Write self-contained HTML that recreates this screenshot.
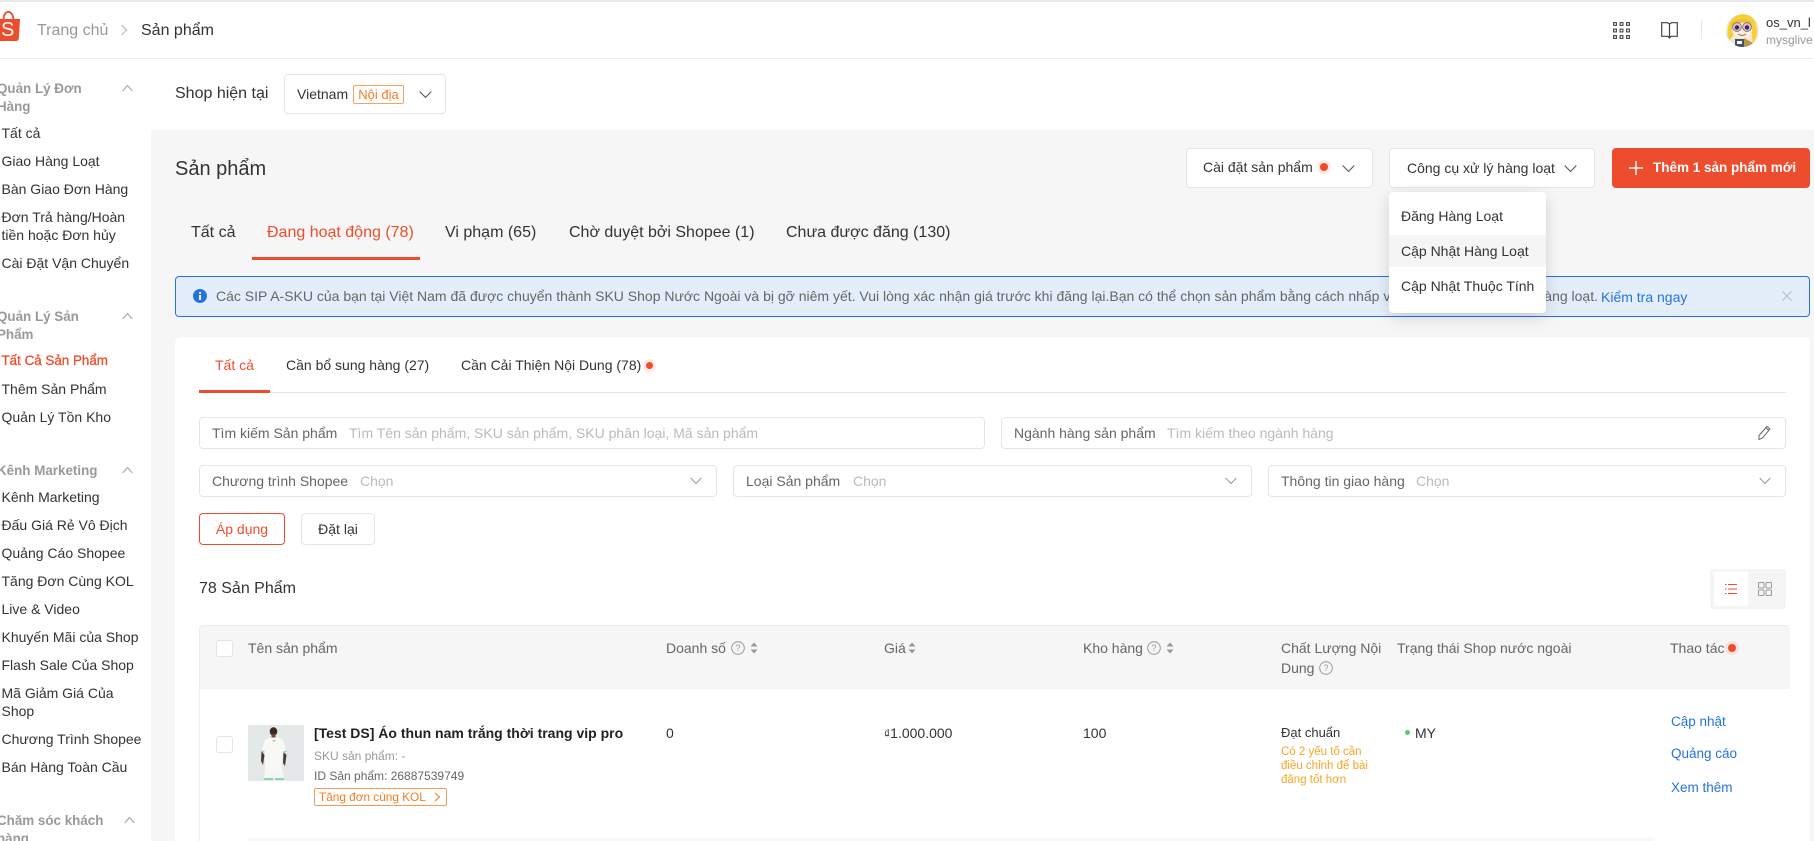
<!DOCTYPE html>
<html lang="vi">
<head>
<meta charset="utf-8">
<title>Sản phẩm</title>
<style>
html,body{margin:0;padding:0;width:1814px;height:841px;overflow:hidden;background:#fff}
body{position:relative;font-family:"Liberation Sans","Noto Sans CJK SC",sans-serif;font-size:14px;color:#333}
.t{position:absolute;white-space:nowrap;line-height:20px}
.b{position:absolute;box-sizing:border-box}
.box{position:absolute;box-sizing:border-box;background:#fff;border:1px solid #e5e5e5;border-radius:4px}
.h{font-weight:700;color:#999;font-size:13.400px;margin-top:1px}
.red{color:#ee4d2d}
.g{color:#999}
.l{color:#bbb}
.m{color:#666}
.a{color:#2673dd}
svg{position:absolute;display:block}
.dot{position:absolute;width:8px;height:8px;border-radius:50%;background:#ee4d2d;box-shadow:0 0 0 3px rgba(238,77,45,.12)}
.cb{position:absolute;box-sizing:border-box;width:17px;height:17px;background:#fff;border:1px solid #e5e5e5;border-radius:3px}
</style>
</head>
<body>
<!-- top -->
<div class="b" style="left:0;top:0;width:1814px;height:2px;background:#e8e8e8"></div>
<div class="b" style="left:0;top:58px;width:1814px;height:1px;background:#ececec"></div>
<svg style="left:0;top:11px" width="20" height="31" viewBox="0 0 20 31"><path d="M-1 8H20L18.800 27.500Q18.600 30 16 30H-1Z" fill="#ee4d2d"/><path d="M3.500 8C4 -1.500 12.500 -1.500 13.500 8" fill="none" stroke="#ee4d2d" stroke-width="1.800"/></svg>
<div class="t" style="left:1px;top:20px;color:#fff;font-size:20px">S</div>
<div class="t g" style="left:37px;top:21px;font-size:16px">Trang chủ</div>
<svg style="left:120px;top:24px" width="8" height="12" viewBox="0 0 8 12"><path d="M1.500 1L6.500 6L1.500 11" fill="none" stroke="#bbb" stroke-width="1.200"/></svg>
<div class="t" style="left:141px;top:21px;font-size:16px">Sản phẩm</div>
<svg style="left:1613px;top:22px" width="17" height="17" viewBox="0 0 17 17"><g fill="none" stroke="#444" stroke-width="1.100"><rect x=".6" y=".6" width="2.800" height="2.800"/><rect x="7.100" y=".6" width="2.800" height="2.800"/><rect x="13.600" y=".6" width="2.800" height="2.800"/><rect x=".6" y="7.100" width="2.800" height="2.800"/><rect x="7.100" y="7.100" width="2.800" height="2.800"/><rect x="13.600" y="7.100" width="2.800" height="2.800"/><rect x=".6" y="13.600" width="2.800" height="2.800"/><rect x="7.100" y="13.600" width="2.800" height="2.800"/><rect x="13.600" y="13.600" width="2.800" height="2.800"/></g></svg>
<svg style="left:1661px;top:22px" width="17" height="17" viewBox="0 0 17 17"><path d="M.7.7H6.500L8.500 2L10.500.7H16.300V14.300H10L8.500 16L7 14.300H.7ZM8.500 2V16" fill="none" stroke="#444" stroke-width="1.200"/></svg>
<div class="b" style="left:1701px;top:20px;width:1px;height:18px;background:#e5e5e5"></div>
<svg style="left:1726px;top:14px" width="33" height="33" viewBox="0 0 33 33"><defs><clipPath id="av"><circle cx="16.500" cy="16.500" r="16.500"/></clipPath></defs><g clip-path="url(#av)"><rect width="33" height="33" fill="#f4e6d2"/><path d="M0 33V18L3 28L9 33Z" fill="#6f7f5a"/><path d="M3 26C-1 12 5 1 17 0C28 1 33 10 30 24L27 30L25 14C20 8 12 8 8 14L7 22Z" fill="#f2d03a"/><ellipse cx="16" cy="15.500" rx="10" ry="9" fill="#fbeedd"/><path d="M5 9C10 4 20 3 27 9C22 8 12 8 5 12Z" fill="#eec52c"/><circle cx="11" cy="13" r="4.400" fill="#eab6d6" stroke="#6a5a6a" stroke-width=".7"/><circle cx="21" cy="13" r="4.400" fill="#eab6d6" stroke="#6a5a6a" stroke-width=".7"/><circle cx="11" cy="13.500" r="2.200" fill="#2c3050"/><circle cx="21" cy="13.500" r="2.200" fill="#2c3050"/><path d="M12 20Q16 23 20 20" fill="none" stroke="#a0665a" stroke-width="1"/><rect x="9" y="25" width="9" height="8" fill="#3d5268"/><rect x="11" y="27" width="5" height="3" fill="#fff"/><path d="M18 24L27 29L24 33H18Z" fill="#b9944e"/></g></svg>
<div class="t" style="left:1766px;top:13px;font-size:13px">os_vn_l</div>
<div class="t g" style="left:1766px;top:30px;font-size:12px">mysglive</div>

<!-- sidebar -->
<div class="t h" style="left:-3px;top:78px">Quản Lý Đơn</div>
<div class="t h" style="left:-3px;top:96px">Hàng</div>
<svg style="left:122px;top:84px" width="11" height="8" viewBox="0 0 11 8"><path d="M.7 7L5.500 1.500L10.300 7" fill="none" stroke="#aaa" stroke-width="1.200"/></svg>
<div class="t" style="left:1.500px;top:123px">Tất cả</div>
<div class="t" style="left:1.500px;top:151px">Giao Hàng Loạt</div>
<div class="t" style="left:1.500px;top:179px">Bàn Giao Đơn Hàng</div>
<div class="t" style="left:1.500px;top:207px">Đơn Trả hàng/Hoàn</div>
<div class="t" style="left:1.500px;top:225px">tiền hoặc Đơn hủy</div>
<div class="t" style="left:1.500px;top:253px">Cài Đặt Vận Chuyển</div>
<div class="t h" style="left:-3px;top:306px">Quản Lý Sản</div>
<div class="t h" style="left:-3px;top:324px">Phẩm</div>
<svg style="left:122px;top:312px" width="11" height="8" viewBox="0 0 11 8"><path d="M.7 7L5.500 1.500L10.300 7" fill="none" stroke="#aaa" stroke-width="1.200"/></svg>
<div class="t red" style="left:1.500px;top:351px;font-size:13.400px;-webkit-text-stroke:.3px #ee4d2d">Tất Cả Sản Phẩm</div>
<div class="t" style="left:1.500px;top:379px">Thêm Sản Phẩm</div>
<div class="t" style="left:1.500px;top:407px">Quản Lý Tồn Kho</div>
<div class="t h" style="left:-3px;top:460px">Kênh Marketing</div>
<svg style="left:122px;top:466px" width="11" height="8" viewBox="0 0 11 8"><path d="M.7 7L5.500 1.500L10.300 7" fill="none" stroke="#aaa" stroke-width="1.200"/></svg>
<div class="t" style="left:1.500px;top:487px">Kênh Marketing</div>
<div class="t" style="left:1.500px;top:515px">Đấu Giá Rẻ Vô Địch</div>
<div class="t" style="left:1.500px;top:543px">Quảng Cáo Shopee</div>
<div class="t" style="left:1.500px;top:571px">Tăng Đơn Cùng KOL</div>
<div class="t" style="left:1.500px;top:599px">Live &amp; Video</div>
<div class="t" style="left:1.500px;top:627px">Khuyến Mãi của Shop</div>
<div class="t" style="left:1.500px;top:655px">Flash Sale Của Shop</div>
<div class="t" style="left:1.500px;top:683px">Mã Giảm Giá Của</div>
<div class="t" style="left:1.500px;top:701px">Shop</div>
<div class="t" style="left:1.500px;top:729px">Chương Trình Shopee</div>
<div class="t" style="left:1.500px;top:757px">Bán Hàng Toàn Cầu</div>
<div class="t h" style="left:-3px;top:810px">Chăm sóc khách</div>
<div class="t h" style="left:-3px;top:828px">hàng</div>
<svg style="left:124px;top:816px" width="11" height="8" viewBox="0 0 11 8"><path d="M.7 7L5.500 1.500L10.300 7" fill="none" stroke="#aaa" stroke-width="1.200"/></svg>

<!-- shop select -->
<div class="t" style="left:175px;top:84px;font-size:16px">Shop hiện tại</div>
<div class="box" style="left:284px;top:74px;width:162px;height:40px"></div>
<div class="t" style="left:297px;top:84px">Vietnam</div>
<div class="b" style="left:353px;top:85px;width:51px;height:19px;border:1px solid #f4a460;border-radius:2px;color:#f57c1f;font-size:13px;line-height:17px;text-align:center">Nội địa</div>
<svg style="left:419px;top:90px" width="13" height="9" viewBox="0 0 13 9"><path d="M.7 1.500L6.500 7.500L12.300 1.500" fill="none" stroke="#555" stroke-width="1.100"/></svg>

<!-- main bg -->
<div class="b" style="left:151px;top:130px;width:1663px;height:711px;background:#f6f6f6"></div>
<div class="t" style="left:175px;top:159px;font-size:20px;line-height:20px">Sản phẩm</div>
<div class="box" style="left:1186px;top:148px;width:187px;height:40px"></div>
<div class="t" style="left:1203px;top:157px">Cài đặt sản phẩm</div>
<div class="dot" style="left:1320px;top:163px"></div>
<svg style="left:1342px;top:164px" width="13" height="9" viewBox="0 0 13 9"><path d="M.7 1.500L6.500 7.500L12.300 1.500" fill="none" stroke="#555" stroke-width="1.100"/></svg>
<div class="box" style="left:1389px;top:148px;width:206px;height:40px"></div>
<div class="t" style="left:1407px;top:158px">Công cụ xử lý hàng loạt</div>
<svg style="left:1564px;top:164px" width="13" height="9" viewBox="0 0 13 9"><path d="M.7 1.500L6.500 7.500L12.300 1.500" fill="none" stroke="#555" stroke-width="1.100"/></svg>
<div class="b" style="left:1612px;top:148px;width:198px;height:40px;background:#ee4d2d;border-radius:4px"></div>
<svg style="left:1629px;top:161px" width="14" height="14" viewBox="0 0 14 14"><path d="M7 0V14M0 7H14" stroke="#fff" stroke-width="1.400"/></svg>
<div class="t" style="left:1653px;top:158px;color:#fff;font-weight:700;font-size:13.500px">Thêm 1 sản phẩm mới</div>

<!-- tabs -->
<div class="t" style="left:191px;top:223px;font-size:16px">Tất cả</div>
<div class="t red" style="left:267px;top:223px;font-size:16px">Đang hoạt động (78)</div>
<div class="b" style="left:252px;top:257px;width:168px;height:3px;background:#ee4d2d"></div>
<div class="t" style="left:445px;top:223px;font-size:16px">Vi phạm (65)</div>
<div class="t" style="left:569px;top:223px;font-size:16px">Chờ duyệt bởi Shopee (1)</div>
<div class="t" style="left:786px;top:223px;font-size:16px">Chưa được đăng (130)</div>

<!-- alert -->
<div class="b" style="left:175px;top:276px;width:1635px;height:41px;background:#e4eefa;border:1px solid #2673dd;border-radius:4px"></div>
<svg style="left:193px;top:289px" width="14" height="14" viewBox="0 0 14 14"><circle cx="7" cy="7" r="7" fill="#2673dd"/><rect x="6.100" y="3" width="1.900" height="1.900" fill="#fff"/><rect x="6.100" y="6" width="1.900" height="5" fill="#fff"/></svg>
<div class="t m" style="left:216px;top:286px">Các SIP A-SKU của bạn tại Việt Nam đã được chuyển thành SKU Shop Nước Ngoài và bị gỡ niêm yết. Vui lòng xác nhận giá trước khi đăng lại.Bạn có thể chọn sản phẩm bằng cách nhấp vào</div>
<div class="t m" style="right:216px;top:286px">hàng loạt.</div>
<div class="t a" style="left:1601px;top:287px">Kiểm tra ngay</div>
<svg style="left:1782px;top:291px" width="10" height="10" viewBox="0 0 10 10"><path d="M.5.5L9.500 9.500M9.500.5L.5 9.500" stroke="#b8b8b8" stroke-width="1"/></svg>

<!-- card -->
<div class="b" style="left:175px;top:337px;width:1635px;height:504px;background:#fff;border-radius:6px 6px 0 0"></div>
<div class="t red" style="left:215px;top:355px">Tất cả</div>
<div class="t" style="left:286px;top:355px">Cần bổ sung hàng (27)</div>
<div class="t" style="left:461px;top:355px">Cần Cải Thiện Nội Dung (78)</div>
<div class="dot" style="left:646px;top:362px;width:7px;height:7px"></div>
<div class="b" style="left:199px;top:392px;width:1587px;height:1px;background:#e5e5e5"></div>
<div class="b" style="left:199px;top:390px;width:71px;height:3px;background:#ee4d2d"></div>

<!-- filters -->
<div class="box" style="left:199px;top:417px;width:786px;height:32px"></div>
<div class="t m" style="left:212px;top:423px">Tìm kiếm Sản phẩm</div>
<div class="t l" style="left:349px;top:423px">Tìm Tên sản phẩm, SKU sản phẩm, SKU phân loại, Mã sản phẩm</div>
<div class="box" style="left:1001px;top:417px;width:785px;height:32px"></div>
<div class="t m" style="left:1014px;top:423px">Ngành hàng sản phẩm</div>
<div class="t l" style="left:1167px;top:423px">Tìm kiếm theo ngành hàng</div>
<svg style="left:1757px;top:425px" width="15" height="16" viewBox="0 0 15 16"><path d="M2 10.500L10 1.500L13 4L5.500 13L2 14.500ZM9 3L11.800 5.500" fill="none" stroke="#666" stroke-width="1"/></svg>
<div class="box" style="left:199px;top:465px;width:518px;height:32px"></div>
<div class="t m" style="left:212px;top:471px">Chương trình Shopee</div>
<div class="t l" style="left:360px;top:471px">Chọn</div>
<svg style="left:690px;top:477px" width="12" height="8" viewBox="0 0 12 8"><path d="M.7 1L6 6.500L11.300 1" fill="none" stroke="#999" stroke-width="1"/></svg>
<div class="box" style="left:733px;top:465px;width:519px;height:32px"></div>
<div class="t m" style="left:746px;top:471px">Loại Sản phẩm</div>
<div class="t l" style="left:853px;top:471px">Chọn</div>
<svg style="left:1225px;top:477px" width="12" height="8" viewBox="0 0 12 8"><path d="M.7 1L6 6.500L11.300 1" fill="none" stroke="#999" stroke-width="1"/></svg>
<div class="box" style="left:1268px;top:465px;width:518px;height:32px"></div>
<div class="t m" style="left:1281px;top:471px">Thông tin giao hàng</div>
<div class="t l" style="left:1416px;top:471px">Chọn</div>
<svg style="left:1759px;top:477px" width="12" height="8" viewBox="0 0 12 8"><path d="M.7 1L6 6.500L11.300 1" fill="none" stroke="#999" stroke-width="1"/></svg>
<div class="box red" style="left:199px;top:513px;width:86px;height:32px;border-color:#ee4d2d;text-align:center;line-height:30px">Áp dụng</div>
<div class="box" style="left:301px;top:513px;width:74px;height:32px;text-align:center;line-height:30px">Đặt lại</div>

<div class="t" style="left:199px;top:579px;font-size:16px">78 Sản Phẩm</div>
<div class="b" style="left:1710px;top:569px;width:76px;height:40px;background:#f5f5f5;border-radius:3px"></div>
<div class="b" style="left:1714px;top:572px;width:34px;height:34px;background:#fff"></div>
<svg style="left:1725px;top:583px" width="12" height="12" viewBox="0 0 12 12"><path d="M0 1.500H1.500M3 1.500H12M0 6H1.500M3 6H12M0 10.500H1.500M3 10.500H12" stroke="#ee4d2d" stroke-width="1"/></svg>
<svg style="left:1758px;top:582px" width="14" height="14" viewBox="0 0 14 14"><g fill="none" stroke="#999" stroke-width="1"><rect x=".5" y=".5" width="5.500" height="5.500" rx="1"/><rect x="8" y=".5" width="5.500" height="5.500" rx="1"/><rect x=".5" y="8" width="5.500" height="5.500" rx="1"/><rect x="8" y="8" width="5.500" height="5.500" rx="1"/></g></svg>

<!-- table head -->
<div class="b" style="left:199px;top:625px;width:1591px;height:64px;background:#f6f6f6;border:1px solid #ececec;border-bottom:0;border-right:0;border-radius:4px 4px 0 0"></div>
<div class="b" style="left:199px;top:689px;width:1px;height:152px;background:#f0f0f0"></div>
<div class="cb" style="left:216px;top:640px"></div>
<div class="t m" style="left:248px;top:638px">Tên sản phẩm</div>
<div class="t m" style="left:666px;top:638px">Doanh số</div>
<svg style="left:731px;top:641px" width="14" height="14" viewBox="0 0 14 14"><circle cx="7" cy="7" r="6.300" fill="none" stroke="#999"/><text x="7" y="10.200" font-size="9" text-anchor="middle" fill="#999" font-family="Liberation Sans">?</text></svg>
<svg style="left:750px;top:642px" width="8" height="12" viewBox="0 0 8 12"><path d="M4 .5L7.500 4.500H.5ZM4 11.500L.5 7.500H7.500Z" fill="#999"/></svg>
<div class="t m" style="left:884px;top:638px">Giá</div>
<svg style="left:908px;top:642px" width="8" height="12" viewBox="0 0 8 12"><path d="M4 .5L7.500 4.500H.5ZM4 11.500L.5 7.500H7.500Z" fill="#999"/></svg>
<div class="t m" style="left:1083px;top:638px">Kho hàng</div>
<svg style="left:1147px;top:641px" width="14" height="14" viewBox="0 0 14 14"><circle cx="7" cy="7" r="6.300" fill="none" stroke="#999"/><text x="7" y="10.200" font-size="9" text-anchor="middle" fill="#999" font-family="Liberation Sans">?</text></svg>
<svg style="left:1166px;top:642px" width="8" height="12" viewBox="0 0 8 12"><path d="M4 .5L7.500 4.500H.5ZM4 11.500L.5 7.500H7.500Z" fill="#999"/></svg>
<div class="t m" style="left:1281px;top:638px">Chất Lượng Nội</div>
<div class="t m" style="left:1281px;top:658px">Dung</div>
<svg style="left:1319px;top:661px" width="14" height="14" viewBox="0 0 14 14"><circle cx="7" cy="7" r="6.300" fill="none" stroke="#999"/><text x="7" y="10.200" font-size="9" text-anchor="middle" fill="#999" font-family="Liberation Sans">?</text></svg>
<div class="t m" style="left:1397px;top:638px">Trạng thái Shop nước ngoài</div>
<div class="t m" style="left:1670px;top:638px">Thao tác</div>
<div class="dot" style="left:1728px;top:644px;width:8px;height:8px"></div>

<!-- row -->
<div class="cb" style="left:216px;top:736px"></div>
<svg style="left:248px;top:725px" width="56" height="56" viewBox="0 0 56 56"><rect width="56" height="56" fill="#e4e8e8"/><ellipse cx="25.500" cy="6.500" rx="3.800" ry="4.200" fill="#3a2a20"/><rect x="23.500" y="9" width="4" height="4" fill="#6a4a38"/><path d="M17 15L22 12.500H30L35 15L38.500 26L35.500 27L34 34L34 45H17L17 34L16 27L13.500 26Z" fill="#f8f8f7"/><path d="M13.500 26L13 36L15 40L16.500 30ZM35.500 27L35 38L37 41L38.500 30Z" fill="#4a3a30"/><path d="M24 15L28 15L26 17Z" fill="#8fd0b0"/><path d="M13.500 26L16.500 27M35.500 27L38.500 26" stroke="#8fd0b0" stroke-width="1.200"/><path d="M17 45H35L36 55H27L26 50L25 55H16Z" fill="#f6f7f4"/><path d="M16 54H25M27 54H36" stroke="#7fcfa6" stroke-width="1.800"/></svg>
<div class="t" style="left:314px;top:723px;font-weight:700;color:#222">[Test DS] Áo thun nam trắng thời trang vip pro</div>
<div class="t g" style="left:314px;top:746px;font-size:12px">SKU sản phẩm: -</div>
<div class="t m" style="left:314px;top:766px;font-size:12px">ID Sản phẩm: 26887539749</div>
<div class="b" style="left:314px;top:788px;width:133px;height:18px;border:1px solid #f79a54;border-radius:2px;color:#f57c1f;font-size:11.800px;line-height:16px;padding-left:4px;white-space:nowrap">Tăng đơn cùng KOL</div>
<svg style="left:434px;top:792px" width="7" height="10" viewBox="0 0 7 10"><path d="M1 1L5.500 5L1 9" fill="none" stroke="#f57c1f" stroke-width="1.100"/></svg>
<div class="t" style="left:666px;top:723px">0</div>
<div class="t" style="left:884px;top:723px"><span style="font-size:12px">₫</span>1.000.000</div>
<div class="t" style="left:1083px;top:723px">100</div>
<div class="t" style="left:1281px;top:723px;font-size:13px">Đạt chuẩn</div>
<div class="t" style="left:1281px;top:742px;font-size:11.500px;color:#f5a623">Có 2 yếu tố cần</div>
<div class="t" style="left:1281px;top:756px;font-size:11.500px;color:#f5a623">điều chỉnh để bài</div>
<div class="t" style="left:1281px;top:770px;font-size:11.500px;color:#f5a623">đăng tốt hơn</div>
<div class="b" style="left:1405px;top:730px;width:5px;height:5px;border-radius:50%;background:#55cc77"></div>
<div class="t" style="left:1415px;top:723px">MY</div>
<div class="t a" style="left:1671px;top:712px;font-size:13.500px">Cập nhật</div>
<div class="t a" style="left:1671px;top:744px;font-size:13.500px">Quảng cáo</div>
<div class="t a" style="left:1671px;top:778px;font-size:13.500px">Xem thêm</div>
<div class="b" style="left:248px;top:838px;width:1406px;height:3px;background:#f8f8f8"></div>

<!-- dropdown -->
<div class="b" style="left:1389px;top:192px;width:157px;height:121px;background:#fff;border-radius:4px;box-shadow:0 4px 16px rgba(0,0,0,.15)"></div>
<div class="b" style="left:1389px;top:235px;width:157px;height:32px;background:#f5f5f5"></div>
<div class="t" style="left:1401px;top:206px">Đăng Hàng Loạt</div>
<div class="t" style="left:1401px;top:241px">Cập Nhật Hàng Loạt</div>
<div class="t" style="left:1401px;top:276px">Cập Nhật Thuộc Tính</div>
</body>
</html>
